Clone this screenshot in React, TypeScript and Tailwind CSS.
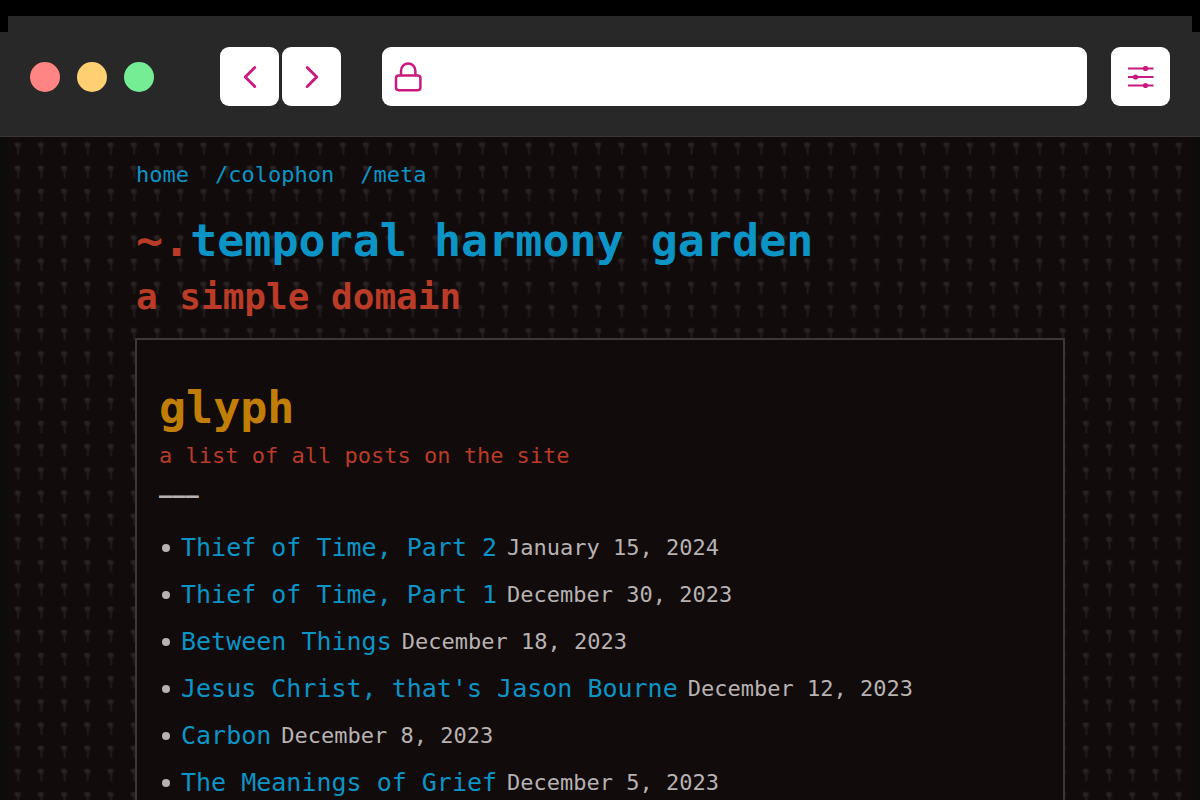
import { ChevronLeft, ChevronRight } from "lucide-react";

const posts = [
  { title: "Thief of Time, Part 2", date: "January 15, 2024" },
  { title: "Thief of Time, Part 1", date: "December 30, 2023" },
  { title: "Between Things", date: "December 18, 2023" },
  { title: "Jesus Christ, that's Jason Bourne", date: "December 12, 2023" },
  { title: "Carbon", date: "December 8, 2023" },
  { title: "The Meanings of Grief", date: "December 5, 2023" },
];

function LockIcon() {
  return (
    <svg viewBox="0 0 28 30" className="h-[30px] w-7 shrink-0" fill="none" stroke="#c9187e" strokeWidth="2.5" aria-hidden="true">
      <rect x="2" y="13.6" width="24.4" height="14.6" rx="2.6" />
      <path d="M7 13.4V8.800a7.200 7.200 0 0 1 14.400 0v4.600" />
    </svg>
  );
}

function SlidersIcon() {
  return (
    <svg viewBox="0 0 26 22" className="h-[22px] w-[26px]" fill="#c9187e" stroke="#c9187e" strokeWidth="2" aria-hidden="true">
      <path d="M0 2.500h25.500M0 11h25.500M0 19.500h25.500" />
      <circle cx="17.5" cy="2.5" r="1.6" />
      <circle cx="7.500" cy="11" r="1.6" />
      <circle cx="17.5" cy="19.5" r="1.6" />
    </svg>
  );
}

function Wallpaper() {
  return (
    <svg className="absolute inset-0 h-full w-full" aria-hidden="true">
      <defs>
        <pattern id="sprout" x="-2" y="1" width="23.22" height="23.2" patternUnits="userSpaceOnUse">
          <path d="M8 5.5q3.600-3 7.200 0l-.6 3-1.300 2-.2 6.500h-1.800l-.3-6.500-2-2z" fill="#221b1b" />
          <path d="M9.500 5.500q2-1.500 4 0l-.6 3h-2.600z" fill="#2a2323" />
        </pattern>
      </defs>
      <rect width="1184" height="100%" fill="url(#sprout)" />
    </svg>
  );
}

function BrowserBar() {
  return (
    <header className="bg-black pt-4">
      <div className="mx-2 h-4 bg-[#282828]" />
      <div className="flex h-[105px] items-start border-b border-[#3a3636] bg-[#282828] px-[30px] pt-[15px]">
        <div className="flex h-[60px] w-[190px] shrink-0 items-center gap-[17px]">
          <span className="size-[30px] rounded-full bg-[#ff8585]" />
          <span className="size-[30px] rounded-full bg-[#ffd071]" />
          <span className="size-[30px] rounded-full bg-[#74ed94]" />
        </div>
        <div className="flex shrink-0 gap-[3px]">
          <button aria-label="Back" className="flex size-[59px] items-center justify-center rounded-[9px] bg-white text-[#c9187e]">
            <ChevronLeft size={38} strokeWidth={1.8} />
          </button>
          <button aria-label="Forward" className="flex size-[59px] items-center justify-center rounded-[9px] bg-white text-[#c9187e]">
            <ChevronRight size={38} strokeWidth={1.8} />
          </button>
        </div>
        <label className="mr-6 ml-[41px] flex h-[59px] min-w-0 flex-1 items-center gap-3 rounded-[9px] bg-white px-3">
          <LockIcon />
          <input type="text" aria-label="Address" className="min-w-0 flex-1 bg-transparent text-xl outline-none" />
        </label>
        <button aria-label="Settings" className="flex size-[59px] shrink-0 items-center justify-center rounded-[9px] bg-white">
          <SlidersIcon />
        </button>
      </div>
    </header>
  );
}

export default function App() {
  return (
    <div className="flex h-screen flex-col overflow-hidden bg-[#0c0c0c] font-['DejaVu_Sans_Mono',monospace]">
      <BrowserBar />
      <div className="relative mx-2 min-h-0 flex-1 overflow-hidden bg-[#110b0b]">
        <Wallpaper />
        <div className="relative mx-[127px] text-[22px]">
          <nav className="flex gap-[26px] px-px pt-5 leading-9 text-[#0c94c6]">
            <a href="#home">home</a>
            <a href="#colophon">/colophon</a>
            <a href="#meta">/meta</a>
          </nav>
          <h1 className="mt-5 px-px text-[45px] leading-[56px] font-bold text-[#b93b28]">
            ~.<a href="#top" className="text-[#0c94c6]">temporal harmony garden</a>
          </h1>
          <p className="px-px text-[36px] leading-[56px] font-bold text-[#b93b28]">a simple domain</p>
          <main className="mt-[13px] border-2 border-[#3d3838] bg-[#110b0b] px-[22px] pt-10">
            <h2 className="text-[45px] leading-[56px] font-bold text-[#c17e06]">glyph</h2>
            <p className="leading-10 text-[#b93b28]">a list of all posts on the site</p>
            <p className="leading-10 font-bold text-[#b8b2b2]">–––</p>
            <ul className="mt-2 pb-10">
              {posts.map((post) => (
                <li key={post.title} className="flex items-center leading-[47px] text-[#b8b2b2]">
                  <span className="mr-[11px] ml-[3px] size-2 rounded-full bg-[#b8b2b2]" />
                  <a href="#post" className="mr-[10px] text-[25px] text-[#0c94c6]">{post.title}</a>
                  <time>{post.date}</time>
                </li>
              ))}
            </ul>
          </main>
        </div>
      </div>
    </div>
  );
}
